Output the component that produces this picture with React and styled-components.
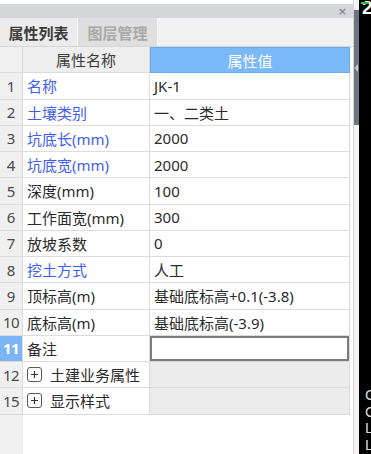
import React from "react";
import styled, { createGlobalStyle } from "styled-components";

const Global = createGlobalStyle`
  html, body { margin: 0; padding: 0; background: #fff; }
  body { font-family: "Noto Sans", "Noto Sans CJK SC", sans-serif; }
  * { box-sizing: border-box; }
`;

const Root = styled.div`
  display: flex;
  width: 371px;
  height: 454px;
  overflow: hidden;
`;

const Panel = styled.div`
  width: 354px;
  display: flex;
  flex-direction: column;
  background: #fff;
  border-right: 1px solid #d4d4d4;
  padding-top: 4px;
`;

const TitleBar = styled.div`
  height: 14px;
  background: #d5d6d9;
  display: flex;
  justify-content: flex-end;
  align-items: center;
  padding-right: 6px;
`;

const Close = styled.span`
  font-family: "DejaVu Sans", sans-serif;
  font-size: 11px;
  line-height: 1;
  color: #8a8b8e;
  font-weight: bold;
`;

const Tabs = styled.div`
  height: 29px;
  display: flex;
  background: #f2f2f2;
  border-bottom: 1px solid #d6d6d6;
`;

const Tab = styled.div`
  width: ${(p) => p.$w}px;
  display: flex;
  align-items: center;
  justify-content: center;
  font-family: "Noto Sans CJK SC", sans-serif;
  font-size: 15px;
  font-weight: 700;
  color: ${(p) => (p.$active ? "#3a3a3a" : "#a9a9a9")};
  background: ${(p) => (p.$active ? "#ebebeb" : "#dfdfdf")};
  border-right: 1px solid #f6f6f6;
`;

const Table = styled.div`
  flex: 1;
  display: grid;
  grid-template-columns: 23px 127px 200px;
  grid-auto-rows: 26.25px;
  align-content: start;
  font-size: 15px;
  background: linear-gradient(to right, #f0f0f0 0 23px, #fff 23px);
`;

const NumCell = styled.div`
  display: flex;
  align-items: center;
  justify-content: center;
  font-family: "Noto Sans", sans-serif;
  font-size: 15px;
  color: ${(p) => (p.$sel ? "#fff" : "#4a4a4a")};
  font-weight: ${(p) => (p.$sel ? 700 : 400)};
  background: ${(p) => (p.$sel ? "#7ab6f5" : "#f0f0f0")};
  border-bottom: 1px solid #dcdcdc;
  border-right: 1px solid #dcdcdc;
  letter-spacing: ${(p) => (p.$tight ? "-0.5px" : "0")};
`;

const HeadCell = styled.div`
  display: flex;
  align-items: center;
  justify-content: center;
  font-family: "Noto Sans CJK SC", sans-serif;
  font-size: 15px;
  color: ${(p) => (p.$blue ? "#fff" : "#3a3a3a")};
  background: ${(p) => (p.$blue ? "#7ab8f7" : "#eeeeee")};
  border: ${(p) => (p.$blue ? "1px solid #6aa8ea" : "none")};
  border-bottom: 1px solid ${(p) => (p.$blue ? "#6aa8ea" : "#dcdcdc")};
  border-right: ${(p) => (p.$blue ? "1px solid #6aa8ea" : "1px solid #dcdcdc")};
`;

const NameCell = styled.div`
  display: flex;
  align-items: center;
  gap: 8px;
  padding-left: 4px;
  font-family: "Noto Sans", "Noto Sans CJK SC", sans-serif;
  font-size: 15px;
  white-space: nowrap;
  color: ${(p) => (p.$blue ? "#3f5ef2" : "#2b2b2b")};
  border-bottom: 1px solid #dcdcdc;
  border-right: 1px solid #dcdcdc;
  background: #fff;
`;

const ValueCell = styled.div`
  display: flex;
  align-items: center;
  padding-left: 4px;
  font-family: "Noto Sans", "Noto Sans CJK SC", sans-serif;
  font-size: 15px;
  white-space: nowrap;
  color: #2b2b2b;
  background: ${(p) => (p.$group ? "#ebebeb" : "#fff")};
  border-bottom: 1px solid #dcdcdc;
  border-right: 1px solid #dcdcdc;
  ${(p) => (p.$edit ? "box-shadow: inset 0 0 0 2px #7b7b7b;" : "")}
`;

const Plus = styled.span`
  width: 15px;
  height: 15px;
  border: 1px solid #5a5a5a;
  border-radius: 3px;
  display: inline-flex;
  align-items: center;
  justify-content: center;
  flex: none;
  svg { display: block; }
`;

const Strip = styled.div`
  width: 5px;
  background: #f4f4f4;
  padding-top: 10px;
`;

const Thumb = styled.div`
  height: 115px;
  background: #6d7580;
  display: flex;
  align-items: center;
  justify-content: flex-start;
  svg { display: block; }
`;

const Dark = styled.div`
  flex: 1;
  background: #000;
  display: flex;
  flex-direction: column;
  justify-content: space-between;
  overflow: hidden;
`;

const TopGlyph = styled.div`
  position: relative;
  font-family: "Liberation Sans", sans-serif;
  font-weight: 700;
  font-size: 19px;
  line-height: 17px;
  color: #fff;
  padding-left: 3px;
  margin-top: -1px;
  &::before {
    content: "";
    position: absolute;
    left: 2px;
    top: 3px;
    width: 8px;
    height: 2px;
    background: #2fbf3a;
  }
`;

const Cut = styled.div`
  font-family: "Liberation Sans", sans-serif;
  font-size: 15px;
  line-height: 16.5px;
  color: #d8d8d8;
  padding-left: 6px;
  padding-bottom: 1px;
  white-space: pre;
`;

const rows = [
  { n: "1", name: "名称", blue: true, value: "JK-1" },
  { n: "2", name: "土壤类别", blue: true, value: "一、二类土" },
  { n: "3", name: "坑底长(mm)", blue: true, value: "2000" },
  { n: "4", name: "坑底宽(mm)", blue: true, value: "2000" },
  { n: "5", name: "深度(mm)", value: "100" },
  { n: "6", name: "工作面宽(mm)", value: "300" },
  { n: "7", name: "放坡系数", value: "0" },
  { n: "8", name: "挖土方式", blue: true, value: "人工" },
  { n: "9", name: "顶标高(m)", value: "基础底标高+0.1(-3.8)" },
  { n: "10", name: "底标高(m)", value: "基础底标高(-3.9)" },
  { n: "11", name: "备注", value: "", sel: true },
  { n: "12", name: "土建业务属性", group: true },
  { n: "15", name: "显示样式", group: true },
];

const PlusIcon = () => (
  <Plus>
    <svg width="9" height="9" viewBox="0 0 9 9">
      <path d="M4.5 1v7M1 4.5h7" stroke="#333" strokeWidth="1.2" />
    </svg>
  </Plus>
);

export default function App() {
  return (
    <Root>
      <Global />
      <Panel>
        <TitleBar>
          <Close>×</Close>
        </TitleBar>
        <Tabs>
          <Tab $active $w={78}>属性列表</Tab>
          <Tab $w={80}>图层管理</Tab>
        </Tabs>
        <Table>
          <NumCell />
          <HeadCell>属性名称</HeadCell>
          <HeadCell $blue>属性值</HeadCell>
          {rows.map((r) => (
            <React.Fragment key={r.n}>
              <NumCell $sel={r.sel} $tight={r.n.length > 1}>{r.n}</NumCell>
              <NameCell $blue={r.blue}>
                {r.group && <PlusIcon />}
                {r.name}
              </NameCell>
              <ValueCell $group={r.group} $edit={r.sel}>{r.value}</ValueCell>
            </React.Fragment>
          ))}
        </Table>
      </Panel>
      <Strip>
        <Thumb>
          <svg width="5" height="10" viewBox="0 0 5 10">
            <path d="M4 1L0.5 5L4 9Z" fill="#c9cdd2" />
          </svg>
        </Thumb>
      </Strip>
      <Dark>
        <TopGlyph>2</TopGlyph>
        <Cut>{"C\nC\nL\nL"}</Cut>
      </Dark>
    </Root>
  );
}
